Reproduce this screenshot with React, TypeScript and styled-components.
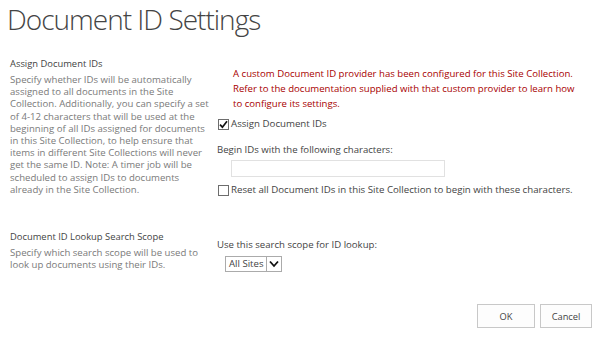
import React from "react";
import styled, { createGlobalStyle } from "styled-components";

const Global = createGlobalStyle`
  html, body { margin: 0; padding: 0; background: #fff; }
  body { font-family: "Open Sans", "Noto Sans", sans-serif; color: #444; }
  * { box-sizing: border-box; }
`;

const Page = styled.div`
  width: 600px;
  height: 337px;
  overflow: hidden;
  display: flex;
  flex-direction: column;
`;

const Title = styled.h1`
  margin: 0;
  padding: 0 0 0 7px;
  font-size: 28px;
  font-weight: 300;
  line-height: 38px;
  color: #444;
  letter-spacing: -1px;
`;

const Section = styled.section<{ $top: number }>`
  display: grid;
  grid-template-columns: 207px 1fr;
  padding-left: 10px;
  margin-top: ${(p) => p.$top}px;
`;

const Info = styled.div`
  display: flex;
  flex-direction: column;
  gap: 3px;
`;

const Heading = styled.div`
  font-size: 9.4px;
  line-height: 14px;
  color: #444;
  white-space: nowrap;
`;

const Desc = styled.p`
  margin: 0;
  font-size: 9.6px;
  line-height: 12.2px;
  color: #7a7a7a;
  white-space: nowrap;
`;

const Controls = styled.div<{ $pad: number }>`
  display: flex;
  flex-direction: column;
  padding-top: ${(p) => p.$pad}px;
`;

const Warning = styled.p`
  margin: 0 0 0 16px;
  font-size: 9.6px;
  line-height: 15px;
  color: #a80000;
  white-space: nowrap;
`;

const CheckRow = styled.label<{ $mt: number }>`
  display: flex;
  align-items: center;
  gap: 2px;
  margin-top: ${(p) => p.$mt}px;
  margin-left: 1px;
  font-size: 9.7px;
  line-height: 14px;
  color: #444;
  white-space: nowrap;
`;

const Box = styled.span`
  width: 11px;
  height: 11px;
  border: 1px solid #6d6d6d;
  background: #fff;
  display: inline-flex;
  align-items: center;
  justify-content: center;
  flex: none;
`;

const FieldLabel = styled.div<{ $mt: number }>`
  margin-top: ${(p) => p.$mt}px;
  font-size: 9.6px;
  line-height: 14px;
  color: #444;
  white-space: nowrap;
`;

const TextInput = styled.input`
  margin: 3px 0 0 14px;
  width: 214px;
  height: 17px;
  border: 1px solid #e1e1e1;
  background: #fff;
  padding: 0 4px;
  outline: none;
`;

const Select = styled.div`
  margin: 4px 0 0 8px;
  display: inline-flex;
  align-self: flex-start;
  border: 1px solid #ababab;
  height: 16px;
  background: #fff;
`;

const SelectText = styled.span`
  font-size: 9.6px;
  line-height: 14px;
  padding: 0 3px 0 3px;
  color: #444;
`;

const SelectArrow = styled.span`
  width: 15px;
  border-left: 1px solid #ababab;
  display: flex;
  align-items: center;
  justify-content: center;
`;

const Footer = styled.div`
  margin-top: auto;
  display: flex;
  justify-content: flex-end;
  gap: 5px;
  padding: 0 8px 9px 0;
`;

const Button = styled.button<{ $w: number }>`
  width: ${(p) => p.$w}px;
  height: 24px;
  border: 1px solid #c8c8c8;
  background: #fdfdfd;
  font-family: "Open Sans", "Noto Sans", sans-serif;
  font-size: 9.3px;
  color: #444;
  padding: 0;
`;

const Check = () => (
  <svg width="9" height="9" viewBox="0 0 9 9">
    <path d="M1 4.6 L3.4 7.2 L8 1.2" fill="none" stroke="#111" strokeWidth="1.7" />
  </svg>
);

export default function App() {
  return (
    <Page>
      <Global />
      <Title>Document ID Settings</Title>
      <Section $top={19}>
        <Info>
          <Heading>Assign Document IDs</Heading>
          <Desc>
            Specify whether IDs will be automatically
            <br />
            assigned to all documents in the Site
            <br />
            Collection. Additionally, you can specify a set
            <br />
            of 4-12 characters that will be used at the
            <br />
            beginning of all IDs assigned for documents
            <br />
            in this Site Collection, to help ensure that
            <br />
            items in different Site Collections will never
            <br />
            get the same ID. Note: A timer job will be
            <br />
            scheduled to assign IDs to documents
            <br />
            already in the Site Collection.
          </Desc>
        </Info>
        <Controls $pad={8.5}>
          <Warning>
            A custom Document ID provider has been configured for this Site Collection.
            <br />
            Refer to the documentation supplied with that custom provider to learn how
            <br />
            to configure its settings.
          </Warning>
          <CheckRow $mt={6.5}>
            <Box>
              <Check />
            </Box>
            Assign Document IDs
          </CheckRow>
          <FieldLabel $mt={12}>Begin IDs with the following characters:</FieldLabel>
          <TextInput type="text" />
          <CheckRow $mt={6}>
            <Box />
            Reset all Document IDs in this Site Collection to begin with these characters.
          </CheckRow>
        </Controls>
      </Section>
      <Section $top={33}>
        <Info>
          <Heading>Document ID Lookup Search Scope</Heading>
          <Desc>
            Specify which search scope will be used to
            <br />
            look up documents using their IDs.
          </Desc>
        </Info>
        <Controls $pad={8}>
          <FieldLabel $mt={0}>Use this search scope for ID lookup:</FieldLabel>
          <Select>
            <SelectText>All Sites</SelectText>
            <SelectArrow>
              <svg width="10" height="8" viewBox="0 0 10 8">
                <path d="M1 1.5 L5 6 L9 1.5" fill="none" stroke="#111" strokeWidth="1.8" />
              </svg>
            </SelectArrow>
          </Select>
        </Controls>
      </Section>
      <Footer>
        <Button $w={58}>OK</Button>
        <Button $w={52}>Cancel</Button>
      </Footer>
    </Page>
  );
}
